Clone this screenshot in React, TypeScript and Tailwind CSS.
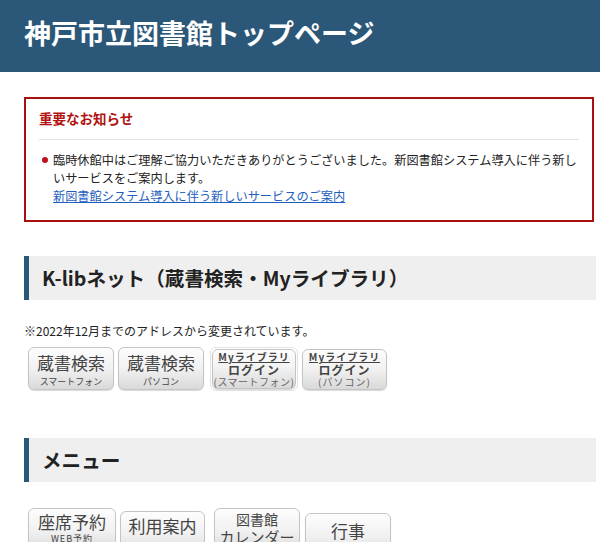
const font = "font-['Noto_Sans_CJK_JP','Noto_Sans',sans-serif]";

function ImgButton({
  className = "",
  children,
}: {
  className?: string;
  children: React.ReactNode;
}) {
  return (
    <div
      className={`flex shrink-0 flex-col items-center justify-center whitespace-nowrap rounded-[6px] border border-[#c4c4c4] bg-gradient-to-b from-[#fdfdfd] via-[#f1f1f1] to-[#d9d9d9] text-[#444] shadow-[0_1px_1px_rgba(0,0,0,0.15)] ${className}`}
    >
      {children}
    </div>
  );
}

function SectionHeading({ children }: { children: React.ReactNode }) {
  return (
    <h2 className="flex h-[44px] items-center border-l-[5px] border-[#2b5878] bg-[#efefef] pl-[13px] text-[19.6px] font-bold text-[#222]">
      {children}
    </h2>
  );
}

export default function App() {
  return (
    <div className={`${font} min-h-[542px] w-[600px] overflow-hidden bg-white text-[#222]`}>
      <header className="h-[72px] bg-[#2b5878] pl-6 pt-[13px]">
        <h1 className="text-[27px] font-bold leading-[40px] text-white">神戸市立図書館トップページ</h1>
      </header>

      <div className="pl-6 pr-1">
        <div className="mr-[2px] mt-[25px] border-2 border-[#a80f0f] px-[13px] pb-[15px] pt-[8px]">
          <h3 className="text-[13.5px] font-bold leading-[22px] text-[#b0120f]">重要なお知らせ</h3>
          <hr className="mb-[11px] mt-[10px] border-[#e2e2e2]" />
          <div className="flex text-[12.2px] leading-[18px]">
            <span className="flex w-[14px] shrink-0 justify-start pl-[3px] pt-[6px]">
              <span className="block h-[6px] w-[6px] rounded-full bg-[#c0111a]" />
            </span>
            <div>
              <p>臨時休館中はご理解ご協力いただきありがとうございました。新図書館システム導入に伴う新しいサービスをご案内します。</p>
              <a href="#" className="text-[#1f5fc0] underline">
                新図書館システム導入に伴う新しいサービスのご案内
              </a>
            </div>
          </div>
        </div>

        <div className="mt-[34px]">
          <SectionHeading>K-libネット（蔵書検索・Myライブラリ）</SectionHeading>
        </div>

        <p className="mt-[22px] text-[12px] leading-[18px]">※2022年12月までのアドレスから変更されています。</p>

        <div className="mt-[7px] flex items-start pl-1">
          <ImgButton className="h-[43px] w-[86px]">
            <span className="text-[17px] leading-[25px]">蔵書検索</span>
            <span className="text-[9px] leading-[13px]">スマートフォン</span>
          </ImgButton>
          <ImgButton className="ml-[4px] h-[43px] w-[86px]">
            <span className="text-[17px] leading-[25px]">蔵書検索</span>
            <span className="text-[9px] leading-[13px]">パソコン</span>
          </ImgButton>
          <div className="ml-[6px] rounded-[6px] border border-[#e4e4e4] p-[1px]">
            <ImgButton className="h-[40px] w-[84px]">
              <span className="text-[10px] font-bold leading-[12px] tracking-[1px] underline">Myライブラリ</span>
              <span className="text-[12px] font-bold leading-[13px] tracking-[1px]">ログイン</span>
              <span className="text-[10px] leading-[12px] tracking-[0.5px] text-[#666]">(スマートフォン)</span>
            </ImgButton>
          </div>
          <ImgButton className="ml-[4px] mt-[2px] h-[41px] w-[85px]">
            <span className="text-[10px] font-bold leading-[12px] tracking-[1px] underline">Myライブラリ</span>
            <span className="text-[12px] font-bold leading-[13px] tracking-[1px]">ログイン</span>
            <span className="text-[10px] leading-[12px] tracking-[1px] text-[#666]">(パソコン)</span>
          </ImgButton>
        </div>

        <div className="mt-[47px]">
          <SectionHeading>メニュー</SectionHeading>
        </div>

        <div className="mt-[26px] flex items-start pl-1">
          <ImgButton className="h-[46px] w-[88px] justify-start pt-[2px]">
            <span className="text-[17px] leading-[22px]">座席予約</span>
            <span className="text-[9px] leading-[12px] tracking-[1px]">WEB予約</span>
          </ImgButton>
          <ImgButton className="ml-[4px] mt-[3px] h-[46px] w-[85px] justify-start pt-[3px]">
            <span className="text-[17px] leading-[22px]">利用案内</span>
          </ImgButton>
          <ImgButton className="ml-[9px] h-[46px] w-[86px] justify-start pt-[2px]">
            <span className="text-[14px] leading-[17px]">図書館</span>
            <span className="text-[15px] leading-[18px]">カレンダー</span>
          </ImgButton>
          <ImgButton className="ml-[5px] mt-[5px] h-[46px] w-[86px] justify-start pt-[6px]">
            <span className="text-[17px] leading-[22px]">行事</span>
          </ImgButton>
        </div>
      </div>
    </div>
  );
}
